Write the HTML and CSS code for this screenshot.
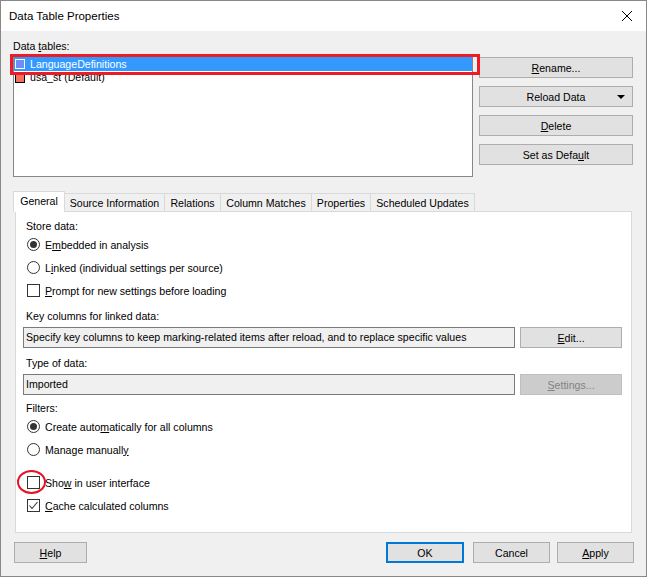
FILE: index.html
```html
<!DOCTYPE html>
<html>
<head>
<meta charset="utf-8">
<link rel="stylesheet" href="styles.css">
</head>
<body>
<div class="window">
  <div class="titlebar">
    <span class="title">Data Table Properties</span>
    <div class="close">
      <svg width="12" height="12" viewBox="0 0 12 12"><path d="M1 1 L11 11 M11 1 L1 11" stroke="#000" stroke-width="1" fill="none"/></svg>
    </div>
  </div>
  <div class="content">
    <div class="label dt-label">Data <u>t</u>ables:</div>
    <div class="top-row">
      <div class="listbox">
        <div class="item selected"><span class="swatch blue"></span>LanguageDefinitions</div>
        <div class="item"><span class="swatch red"></span>usa_st (Default)</div>
        <div class="ring"></div>
      </div>
      <div class="side-buttons">
        <div class="btn"><span><u>R</u>ename...</span></div>
        <div class="btn dropdown"><span>Reload Data</span>
          <svg class="caret" width="8" height="4" viewBox="0 0 8 4"><path d="M0 0 H8 L4 4 Z" fill="#000"/></svg>
        </div>
        <div class="btn"><span><u>D</u>elete</span></div>
        <div class="btn"><span>Set as Defa<u>u</u>lt</span></div>
      </div>
    </div>
    <div class="tabs">
      <div class="tab active t-general">General</div>
      <div class="tab t-source">Source Information</div>
      <div class="tab t-rel">Relations</div>
      <div class="tab t-col">Column Matches</div>
      <div class="tab t-prop">Properties</div>
      <div class="tab t-sched">Scheduled Updates</div>
    </div>
    <div class="panel">
      <div class="label plabel">Store data:</div>
      <div class="opt"><span class="radio on"></span><span class="otext">E<u>m</u>bedded in analysis</span></div>
      <div class="opt"><span class="radio"></span><span class="otext">L<u>i</u>nked (individual settings per source)</span></div>
      <div class="opt"><span class="check"></span><span class="otext"><u>P</u>rompt for new settings before loading</span></div>

      <div class="label plabel key-label">Key columns for linked data:</div>
      <div class="field-row">
        <div class="textbox">Specify key columns to keep marking-related items after reload, and to replace specific values</div>
        <div class="btn fbtn"><span><u>E</u>dit...</span></div>
      </div>

      <div class="label plabel type-label">Type of data:</div>
      <div class="field-row">
        <div class="textbox">Imported</div>
        <div class="btn fbtn disabled"><span><u>S</u>ettings...</span></div>
      </div>

      <div class="label plabel filt-label">Filters:</div>
      <div class="opt"><span class="radio on"></span><span class="otext">Create auto<u>m</u>atically for all columns</span></div>
      <div class="opt"><span class="radio"></span><span class="otext">Manage manuall<u>y</u></span></div>

      <div class="opt show-row"><span class="check"></span><span class="otext">Sho<u>w</u> in user interface</span><span class="circle"></span></div>
      <div class="opt"><span class="check checked"><svg width="11" height="11" viewBox="0 0 11 11"><path d="M1.5 5.5 L4 8.5 L9.5 2" stroke="#333" stroke-width="1.1" fill="none"/></svg></span><span class="otext"><u>C</u>ache calculated columns</span></div>
    </div>
    <div class="footer">
      <div class="btn help"><span><u>H</u>elp</span></div>
      <div class="spacer"></div>
      <div class="btn ok"><span>OK</span></div>
      <div class="btn cancel"><span>Cancel</span></div>
      <div class="btn apply"><span><u>A</u>pply</span></div>
    </div>
  </div>
</div>
</body>
</html>
```
FILE: styles.css
```css
* { box-sizing: border-box; }
html, body { margin: 0; padding: 0; }
body {
  width: 647px;
  height: 577px;
  overflow: hidden;
  background: #f0f0f0;
  font-family: "Liberation Sans", Arial, sans-serif;
  font-size: 10.6px;
  color: #000;
}
u { text-decoration: underline; text-underline-offset: 1px; }

.window {
  width: 647px;
  height: 577px;
  border: 1px solid #888888;
  background: #f0f0f0;
  display: flex;
  flex-direction: column;
}
.titlebar {
  height: 30px;
  flex: none;
  background: #fff;
  display: flex;
  align-items: center;
  justify-content: space-between;
  padding-left: 8px;
}
.title { font-size: 11.5px; }
.close {
  width: 38px;
  height: 30px;
  display: flex;
  align-items: center;
  justify-content: center;
}
.close svg { display: block; }

.content {
  padding: 8px 12px 0 12px;
  flex: 1;
}
.label { line-height: 13px; height: 13px; white-space: nowrap; }
.dt-label { height: 15px; line-height: 14px; }

.top-row { display: flex; gap: 6px; }
.listbox {
  position: relative;
  width: 460px;
  height: 123px;
  background: #fff;
  border: 1px solid #828790;
  padding-top: 2px;
}
.item {
  height: 13px;
  line-height: 13px;
  display: flex;
  align-items: center;
  white-space: nowrap;
}
.item.selected { background: #3399ff; color: #fff; height: 14px; }
.swatch {
  width: 10px;
  height: 10px;
  margin-left: 1px;
  margin-right: 5px;
  flex: none;
}
.swatch.blue { background: #6d8ef2; border: 1px solid #fff; }
.swatch.red { background: #f4705e; border: 1px solid #000; }
.ring {
  position: absolute;
  left: -4px;
  top: -1px;
  width: 470px;
  height: 21px;
  border: 3px solid #ed1c24;
}

.side-buttons {
  width: 154px;
  padding-top: 3px;
  display: flex;
  flex-direction: column;
  gap: 8px;
}
.btn {
  height: 21px;
  border: 1px solid #adadad;
  background: #e1e1e1;
  display: flex;
  align-items: center;
  justify-content: center;
  white-space: nowrap;
}
.btn.dropdown { position: relative; }
.caret { position: absolute; right: 7px; top: 8px; }

.tabs {
  margin-top: 14px;
  height: 20px;
  display: flex;
  align-items: flex-end;
}
.tab {
  height: 18px;
  border-top: 1px solid #d9d9d9;
  border-right: 1px solid #d9d9d9;
  background: #f0f0f0;
  display: flex;
  align-items: center;
  justify-content: center;
  white-space: nowrap;
  padding-top: 1px;
}
.tab.active {
  position: relative;
  height: 21px;
  margin-bottom: -1px;
  background: #fff;
  border: 1px solid #d9d9d9;
  border-bottom: none;
  padding-top: 0;
  padding-bottom: 2px;
}
.t-general { width: 52px; }
.t-source { width: 100px; }
.t-rel { width: 56px; }
.t-col { width: 91px; }
.t-prop { width: 59px; }
.t-sched { width: 104px; }

.panel {
  margin-left: 2px;
  width: 617px;
  height: 322px;
  background: #fff;
  border: 1px solid #d9d9d9;
  padding: 8px 9px 0 8px;
}
.plabel { margin-left: 2px; }
.opt {
  position: relative;
  height: 23px;
  display: flex;
  align-items: center;
  margin-left: 3px;
  white-space: nowrap;
}
.otext { margin-left: 5px; }
.radio {
  width: 13px;
  height: 13px;
  border: 1px solid #333;
  border-radius: 50%;
  background: #fff;
  flex: none;
  display: flex;
  align-items: center;
  justify-content: center;
}
.radio.on::after {
  content: "";
  width: 7px;
  height: 7px;
  border-radius: 50%;
  background: #333;
}
.check {
  width: 13px;
  height: 13px;
  border: 1px solid #333;
  background: #fff;
  flex: none;
  display: flex;
  align-items: center;
  justify-content: center;
}
.check svg { display: block; }

.key-label { margin-top: 8px; }
.type-label { margin-top: 9px; }
.filt-label { margin-top: 7px; }
.field-row {
  margin-top: 4px;
  display: flex;
  gap: 5px;
  height: 21px;
}
.textbox {
  margin-left: -1px;
  width: 493px;
  height: 21px;
  border: 1px solid #7a7a7a;
  background: #f0f0f0;
  padding-left: 2px;
  line-height: 19px;
  white-space: nowrap;
  overflow: hidden;
}
.fbtn { width: 102px; }
.btn.disabled { background: #cccccc; border-color: #bfbfbf; color: #838383; }

.show-row { margin-top: 10px; }
.circle {
  position: absolute;
  left: -10px;
  top: -1px;
  width: 29px;
  height: 24px;
  border: 2px solid #e81123;
  border-radius: 50%;
}

.footer {
  margin-top: 9px;
  display: flex;
  height: 21px;
}
.spacer { flex: 1; }
.help { width: 73px; margin-left: 1px; }
.ok { width: 78px; border: 2px solid #0078d7; }
.cancel { width: 77px; margin-left: 9px; }
.apply { width: 77px; margin-left: 7px; }
```
